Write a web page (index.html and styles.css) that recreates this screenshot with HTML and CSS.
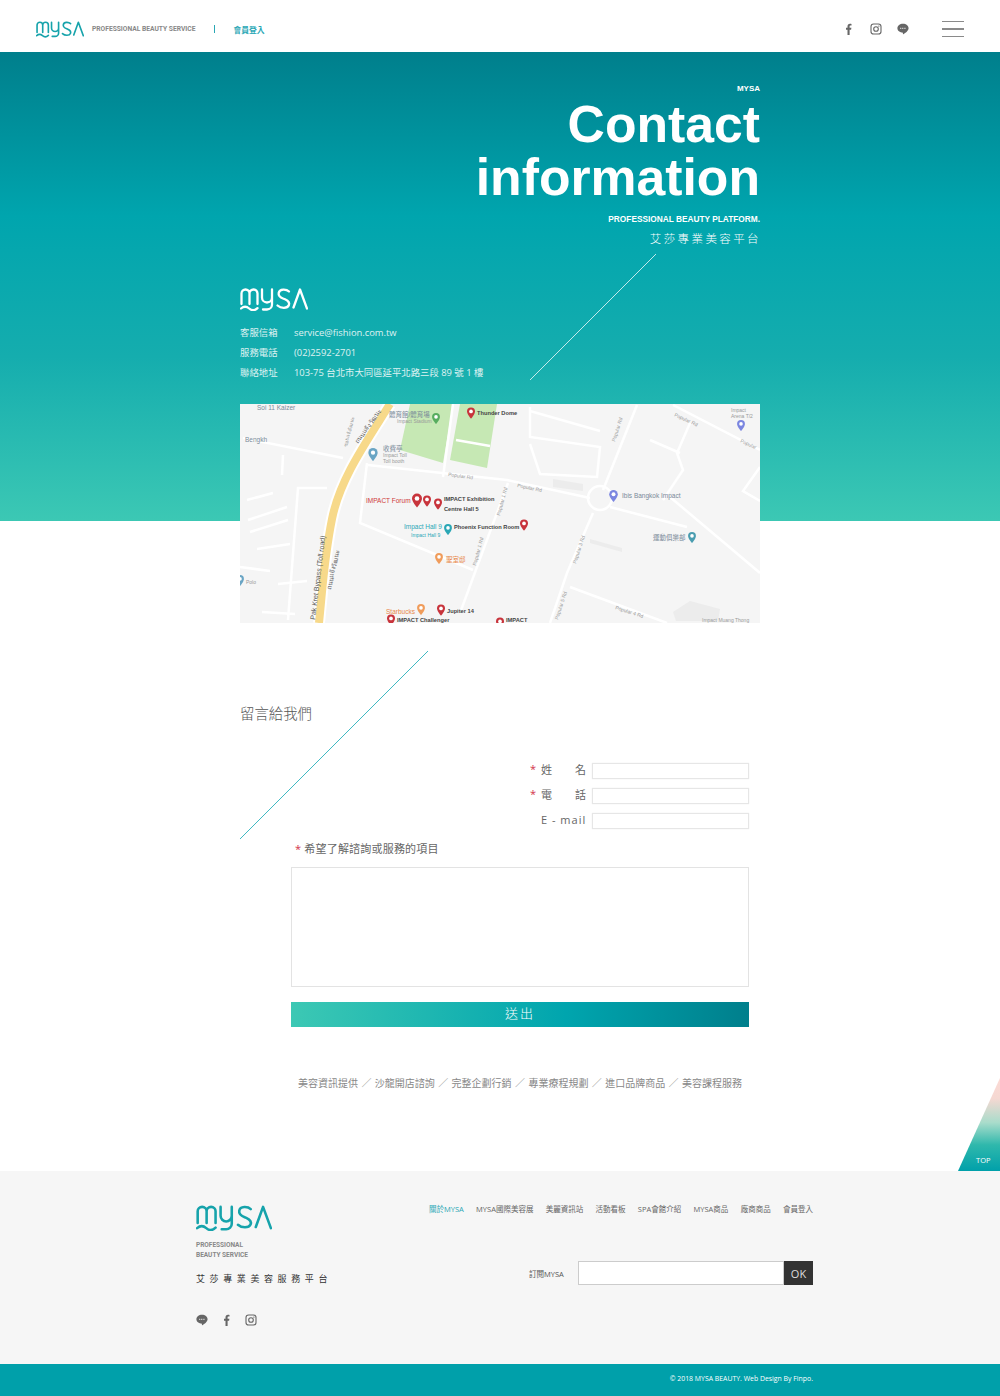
FILE: index.html
```html
<!DOCTYPE html>
<html>
<head>
    <meta charset="utf-8">
    <title>MYSA - Contact information</title>
    <link rel="stylesheet" href="styles.css">
</head>
<body>
    <svg class="sprite" width="0" height="0">
        <symbol id="logo" viewBox="0 0 68 24">
            <g fill="none" stroke="currentColor" stroke-width="2.300" stroke-linecap="round" stroke-linejoin="round">
                <path d="M1.500 17V6.500a4 4 0 0 1 8 0V17M9.500 6.500a4 4 0 0 1 8 0V17"/>
                <path d="M1 21.500c2.800-2.400 5.400-2.400 8.200 0c2.800 2.400 5.400 2.400 8.300-.4"/>
                <path d="M22 2.500v8a5 5 0 0 0 10 0v-8M32 10.500v7a5 5 0 0 1-5 5h-4"/>
                <path d="M49 4.500c-2.500-2.400-9.500-3-10.300 1.500c-.8 4.500 4 5.200 6.300 6.300c3.200 1.500 5 3.200 3.800 6c-1.500 3.400-8 3.200-11.300.2"/>
                <path d="M53.500 20.500L60 2.500l7 19"/>
            </g>
        </symbol>
        <symbol id="ico-f" viewBox="0 0 12 12">
            <path fill="currentColor" d="M4.500 12V6.700H3V4.800h1.500V3.400C4.500 1.700 5.400.8 7 .8c.7 0 1.200 0 1.500.1v1.700h-1c-.7 0-.9.300-.9 1v1.200h1.800l-.3 1.900H6.600V12z"/>
        </symbol>
        <symbol id="ico-ig" viewBox="0 0 12 12">
            <g fill="none" stroke="currentColor" stroke-width="1.100">
                <rect x="1" y="1" width="10" height="10" rx="2.600"/>
                <circle cx="6" cy="6" r="2.300"/>
            </g>
            <circle cx="8.900" cy="3.100" r=".7" fill="currentColor"/>
        </symbol>
        <symbol id="ico-line" viewBox="0 0 12 12">
            <path fill="currentColor" d="M6 .8c3.100 0 5.600 1.900 5.600 4.400c0 2.300-3.100 4.700-5.300 6c-.4.200-.5 0-.4-.4l.1-1.100C2.800 9.500.4 7.600.4 5.200C.4 2.700 2.900.8 6 .8z"/>
            <path stroke="#fff" stroke-width=".8" d="M3 5.300h6" stroke-dasharray="1.200 .6"/>
        </symbol>
        <symbol id="pin" viewBox="0 0 10 14" overflow="visible">
            <path fill="currentColor" d="M5 0a5 5 0 0 1 5 5c0 3.400-5 9-5 9S0 8.400 0 5a5 5 0 0 1 5-5z"/>
            <circle cx="5" cy="5" r="2.300" fill="#fff"/>
        </symbol>
    </svg>

    <header class="topbar">
        <div class="topbar-left">
            <svg class="topbar-logo"><use href="#logo"/></svg>
            <span class="topbar-slogan">PROFESSIONAL BEAUTY SERVICE</span>
            <span class="topbar-sep"></span>
            <a class="topbar-login">會員登入</a>
        </div>
        <div class="topbar-right">
            <svg class="ico"><use href="#ico-f"/></svg>
            <svg class="ico"><use href="#ico-ig"/></svg>
            <svg class="ico"><use href="#ico-line"/></svg>
            <div class="burger"><i></i><i></i><i></i></div>
        </div>
    </header>

    <section class="hero">
        <div class="wrap hero-inner">
            <div class="hero-title">
                <div class="hero-small">MYSA</div>
                <h1>Contact<br>information</h1>
                <div class="hero-platform">PROFESSIONAL BEAUTY PLATFORM.</div>
                <div class="hero-zh">艾莎專業美容平台</div>
            </div>
            <svg class="hero-line" width="128" height="128"><line x1="1" y1="127" x2="127" y2="1"/></svg>
            <svg class="contact-logo"><use href="#logo"/></svg>
            <ul class="contact-list">
                <li><span>客服信箱</span>service@fishion.com.tw</li>
                <li><span>服務電話</span>(02)2592-2701</li>
                <li><span>聯絡地址</span>103-75 台北市大同區延平北路三段 89 號 1 樓</li>
            </ul>
        </div>
    </section>

    <div class="wrap map">
        <svg width="520" height="219" viewBox="0 0 520 219">
            <rect width="520" height="219" fill="#f5f5f5"/>
            <!-- parks -->
            <path fill="#c6e8b4" d="M170 0H213L203 59L160 46Z"/>
            <path fill="#c6e8b4" d="M220 0H257L247 64L210 56Z"/>
            <g class="blocks">
                <path d="M313 75L343 80L343 87L313 83Z"/>
                <path d="M350 135L382 144L382 148L350 139Z"/>
                <path d="M433 208L450 197L480 205L478 217L436 217Z"/>
            </g>
            <!-- roads -->
            <g class="roads">
                <path d="M213 0L203 73"/>
                <path d="M216 36L250 42"/>
                <path d="M3 34L103 54"/>
                <path d="M43 51L42 71"/>
                <path d="M87 84L58 84L48 216"/>
                <path d="M7 96L33 89M8 116L47 103M10 128L48 116M17 145L50 140M0 163L30 167M38 180L67 177M22 208L55 210"/>
                <path d="M127 59L120 119L233 166"/>
                <path d="M128 61L267 76L350 94"/>
                <path d="M268 79L220 209"/>
                <path d="M363 86L397 1"/>
                <path d="M353 109L327 169L310 219"/>
                <path d="M433 1L520 46"/>
                <path d="M410 36L440 49M450 19L437 49L443 66L423 96"/>
                <path d="M370 103L447 123"/>
                <path d="M430 93L520 169"/>
                <path d="M330 183L427 219"/>
                <path d="M290 7L360 27"/>
                <path d="M290 3L290 33L360 43L357 73L300 70L290 40"/>
                <path d="M520 63L503 87L520 97"/>
                <circle cx="360" cy="94" r="12"/>
            </g>
            <!-- highway -->
            <path d="M150 0C125 40 100 75 92 115S83 180 79 219" fill="none" stroke="#fff" stroke-width="12"/>
            <path d="M150 0C125 40 100 75 92 115S83 180 79 219" fill="none" stroke="#f7d98a" stroke-width="8"/>
            <!-- labels -->
            <g class="mlabels">
                <text x="17" y="6" class="g">Soi 11 Kaizer</text>
                <text x="5" y="38" class="g">Bengkh</text>
                <text x="149" y="13" class="g">體育館/體育場</text>
                <text x="157" y="19" class="g6">Impact Stadium</text>
                <text x="143" y="47" class="g">收費亭</text>
                <text x="143" y="53" class="g6">Impact Toll</text>
                <text x="143" y="59" class="g6">Toll booth</text>
                <text x="237" y="11" class="k">Thunder Dome</text>
                <text x="126" y="99" class="r">IMPACT Forum</text>
                <text x="204" y="97" class="k">IMPACT Exhibition</text>
                <text x="204" y="107" class="k">Centre Hall 5</text>
                <text x="164" y="125" class="t">Impact Hall 9</text>
                <text x="171" y="133" class="t6">Impact Hall 9</text>
                <text x="214" y="125" class="k">Phoenix Function Room</text>
                <text x="206" y="158" class="o">聖室邸</text>
                <text x="146" y="210" class="o">Starbucks</text>
                <text x="207" y="209" class="k">Jupiter 14</text>
                <text x="157" y="218" class="k">IMPACT Challenger</text>
                <text x="266" y="218" class="k">IMPACT</text>
                <text x="382" y="94" class="g">Ibis Bangkok Impact</text>
                <text x="413" y="136" class="g">運動俱樂部</text>
                <text x="491" y="8" class="g6">Impact</text>
                <text x="491" y="14" class="g6">Arena T/2</text>
                <text x="6" y="180" class="g6">Polo</text>
                <text x="462" y="218" class="g6">Impact Muang Thong</text>
                <text class="g6" transform="translate(375 38) rotate(-72)">Popular Rd</text>
                <text class="g6" transform="translate(434 12) rotate(25)">Popular Rd</text>
                <text class="g6" transform="translate(500 38) rotate(25)">Popular</text>
                <text class="g6" transform="translate(277 83) rotate(12)">Popular Rd</text>
                <text class="g6" transform="translate(208 72) rotate(8)">Popular Rd</text>
                <text class="g6" transform="translate(260 112) rotate(-75)">Popular 1 Rd</text>
                <text class="g6" transform="translate(236 162) rotate(-75)">Popular 1 Rd</text>
                <text class="g6" transform="translate(336 160) rotate(-72)">Popular 3 Rd</text>
                <text class="g6" transform="translate(318 216) rotate(-72)">Popular 5 Rd</text>
                <text class="g6" transform="translate(375 205) rotate(18)">Popular 4 Rd</text>
                <text class="k6" transform="translate(75 216) rotate(-83)">Pak Kret Bypass (Toll road)</text>
                <text class="d6" transform="translate(91 186) rotate(-78)">ถนนแจ้งวัฒนะ</text>
                <text class="d6" transform="translate(118 40) rotate(-54)">ถนนแจ้งวัฒนะ</text>
                <text class="g6" transform="translate(107 43) rotate(-76)">ซอยแจ้งวัฒนะ</text>
            </g>
            <!-- pins -->
            <g class="pins">
                <use href="#pin" class="red" x="172" y="87" width="10" height="19"/>
                <use href="#pin" class="red" x="183" y="91" width="8" height="12"/>
                <use href="#pin" class="red" x="194" y="94" width="8" height="12"/>
                <use href="#pin" class="red" x="227" y="3" width="8" height="12"/>
                <use href="#pin" class="red" x="197" y="200" width="8" height="12"/>
                <use href="#pin" class="red" x="280" y="115" width="8" height="12"/>
                <use href="#pin" class="red" x="147" y="210" width="8" height="12"/>
                <use href="#pin" class="red" x="256" y="213" width="8" height="12"/>
                <use href="#pin" class="green" x="192" y="9" width="8" height="11"/>
                <use href="#pin" class="blue" x="128" y="44" width="10" height="13"/>
                <use href="#pin" class="teal" x="204" y="120" width="8" height="11"/>
                <use href="#pin" class="orange" x="195" y="149" width="8" height="11"/>
                <use href="#pin" class="orange" x="177" y="200" width="8" height="11"/>
                <use href="#pin" class="violet" x="369" y="86" width="9" height="12"/>
                <use href="#pin" class="slate" x="448" y="128" width="8" height="11"/>
                <use href="#pin" class="violet" x="497" y="16" width="8" height="11"/>
                <use href="#pin" class="blue" x="-4" y="171" width="8" height="11"/>
            </g>
        </svg>
    </div>

    <section class="wrap message">
        <svg class="message-line" width="188" height="188"><line x1="0" y1="188" x2="188" y2="0"/></svg>
        <h2>留言給我們</h2>
        <form class="form">
            <div class="row"><label><b>*</b><span class="spread"><span>姓</span><span>名</span></span></label><input type="text"></div>
            <div class="row"><label><b>*</b><span class="spread"><span>電</span><span>話</span></span></label><input type="text"></div>
            <div class="row"><label><span class="spread">E - mail</span></label><input type="text"></div>
            <p class="ask"><b>*</b> 希望了解諮詢或服務的項目</p>
            <textarea></textarea>
            <button type="button">送出</button>
            <p class="services">美容資訊提供 ／ 沙龍開店諮詢 ／ 完整企劃行銷 ／ 專業療程規劃 ／ 進口品牌商品 ／ 美容課程服務</p>
        </form>
    </section>

    <a class="totop"><span>TOP</span></a>

    <footer class="footer">
        <div class="footer-left">
            <svg class="footer-logo"><use href="#logo"/></svg>
            <p class="footer-en">PROFESSIONAL<br>BEAUTY SERVICE</p>
            <p class="footer-zh">艾莎專業美容服務平台</p>
            <div class="footer-icons">
                <svg class="ico"><use href="#ico-line"/></svg>
                <svg class="ico"><use href="#ico-f"/></svg>
                <svg class="ico"><use href="#ico-ig"/></svg>
            </div>
        </div>
        <div class="footer-right">
            <nav class="footer-nav">
                <a class="on">關於MYSA</a>
                <a>MYSA國際美容展</a>
                <a>美麗資訊站</a>
                <a>活動看板</a>
                <a>SPA會館介紹</a>
                <a>MYSA商品</a>
                <a>廠商商品</a>
                <a>會員登入</a>
            </nav>
            <div class="subscribe">
                <label>訂閱MYSA</label>
                <input type="text">
                <button type="button">OK</button>
            </div>
        </div>
    </footer>
    <div class="copyright">© 2018 MYSA BEAUTY. Web Design By Finpo.</div>
</body>
</html>
```

FILE: styles.css
```css
* { box-sizing: border-box; }
body { margin: 0; background: #fff; font-family: "Open Sans", "Noto Sans CJK TC", sans-serif; color: #666; position: relative; overflow-x: hidden; }
h1, h2, p, ul { margin: 0; padding: 0; }
ul { list-style: none; }
.sprite { position: absolute; }
.wrap { width: 520px; margin: 0 auto; }
.ico { width: 12px; height: 12px; color: #666; display: block; }

.topbar { height: 52px; padding: 6px 36px 0; display: flex; justify-content: space-between; align-items: center; }
.topbar-left { display: flex; align-items: center; }
.topbar-logo { width: 48px; height: 18px; color: #16a3ab; }
.topbar-slogan { margin-left: 8px; font: 700 6.7px "Roboto", sans-serif; color: #888; }
.topbar-sep { width: 1px; height: 8px; background: #2aa7b5; margin: 0 18px 0 19px; }
.topbar-login { font: 700 7.8px "Noto Sans CJK TC", sans-serif; color: #2aa7b5; }
.topbar-right { display: flex; align-items: center; gap: 15px; }
.burger { width: 22px; margin-left: 18px; display: flex; flex-direction: column; gap: 6px; }
.burger i { display: block; height: 1.5px; background: #8a8a8a; }

.hero { height: 469px; background: linear-gradient(#007f8c 0%, #00a5ae 35%, #15adae 65%, #3cc8b4 100%); }
.hero-inner { position: relative; height: 100%; padding-top: 32px; }
.hero-title { text-align: right; color: #fff; }
.hero-small { font: 700 8px/10px "Liberation Sans", sans-serif; }
.hero h1 { font: 700 51.700px/53px "Liberation Sans", sans-serif; margin-top: 4px; }
.hero-platform { font: 700 8.3px/12px "Liberation Sans", sans-serif; margin-top: 9px; }
.hero-zh { font: 300 11.5px/16px "Noto Sans CJK TC", sans-serif; letter-spacing: 2.4px; margin-top: 5px; margin-right: -1px; }
.hero-line { position: absolute; left: 289px; top: 201px; }
.hero-line line { stroke: rgba(255,255,255,.75); stroke-width: 1; }
.contact-logo { display: block; width: 68px; height: 24px; color: #fff; margin-top: 41px; }
.contact-list { margin-top: 12px; color: #fff; font-size: 9.4px; }
.contact-list li { height: 20px; line-height: 20px; opacity: .85; white-space: nowrap; }
.contact-list span { display: inline-block; width: 54px; }

.map { height: 219px; margin-top: -117px; position: relative; }
.map svg { display: block; }
.roads { fill: none; stroke: #fff; stroke-width: 2.5; }
.blocks { fill: #ececec; }
.mlabels text { font-family: "Liberation Sans", "Noto Sans CJK TC", sans-serif; font-size: 6.5px; }
.mlabels .g { fill: #7a8a99; }
.mlabels .g6 { fill: #9a9a9a; font-size: 5px; }
.mlabels .k { fill: #444; font-size: 5.700px; font-weight: 700; }
.mlabels .k6 { fill: #555; font-size: 7px; }
.mlabels .d6 { fill: #666; font-size: 6.5px; }
.mlabels .r { fill: #cf3b3b; }
.mlabels .t { fill: #2aa7b5; }
.mlabels .t6 { fill: #2aa7b5; font-size: 5px; }
.mlabels .o { fill: #e8884a; }
.pins .red { color: #c8343c; }
.pins .green { color: #57ad5f; }
.pins .blue { color: #6aa5c4; }
.pins .teal { color: #2aa7b5; }
.pins .orange { color: #f09c5b; }
.pins .violet { color: #7b86e0; }
.pins .slate { color: #4a9db0; }

.message { position: relative; height: 548px; padding-top: 80px; }
.message-line { position: absolute; left: 0; top: 28px; }
.message-line line { stroke: #3fb9c2; stroke-width: 1; }
.message h2 { font-size: 14.4px; line-height: 20px; font-weight: 300; color: #555; font-family: "Noto Sans CJK TC", sans-serif; }
.form { width: 458px; margin: 40px 0 0 51px; }
.row { display: flex; justify-content: flex-end; align-items: center; height: 16px; margin: 0 0 9px; }
.row label { display: flex; justify-content: flex-end; width: 56px; margin-right: 6px; font-size: 11px; line-height: 14px; color: #666; letter-spacing: 1px; position: relative; top: -1px; }
.row label b, .ask b { color: #d2324a; font-weight: 400; }
.row label b { position: absolute; left: 0; top: -1px; }
.spread { display: flex; justify-content: space-between; width: 46px; margin-right: -1px; white-space: nowrap; }
.row input { width: 157px; height: 16px; border: 1px solid #e6e6e6; background: #fff; box-shadow: 0 0 1px #e6e6e6; }
.ask { margin-top: 12px; padding-left: 4px; font-size: 11px; line-height: 16px; color: #666; letter-spacing: .2px; }
.form textarea { display: block; width: 458px; height: 120px; margin-top: 10px; border: 1px solid #e3e3e3; resize: none; }
.form > button { display: block; width: 458px; height: 25px; margin-top: 15px; padding: 0 0 4px; border: 0; background: linear-gradient(to right, #3cc8b4, #00a5ae 60%, #007f8c); color: #fff; font: 300 13px "Noto Sans CJK TC", sans-serif; letter-spacing: 2px; }
.services { margin-top: 48px; text-align: center; font-size: 10px; line-height: 16px; color: #888; white-space: nowrap; word-spacing: .8px; }

.totop { position: absolute; left: 958px; top: 1078px; width: 42px; height: 93px; clip-path: polygon(100% 0, 100% 100%, 0 100%); background: linear-gradient(#fcd9d4 0%, #f5d8d2 22%, #a9dccb 48%, #2fb8ac 72%, #00a0aa 100%); }
.totop span { position: absolute; left: 18px; bottom: 6px; font: 400 7.5px "Open Sans", sans-serif; color: #fff; }

.footer { height: 193px; background: #f6f6f6; padding: 33px 187px 0 196px; display: flex; justify-content: space-between; }
.footer-logo { display: block; width: 76px; height: 27px; color: #16a3ab; }
.footer-en { margin-top: 9px; font: 700 6.5px/10px "Roboto", sans-serif; color: #888; }
.footer-zh { margin-top: 13px; font: 400 9px/12px "Noto Sans CJK TC", sans-serif; letter-spacing: 4.6px; color: #333; white-space: nowrap; }
.footer-icons { display: flex; gap: 12.500px; margin-top: 29px; }
.footer-right { width: 384px; }
.footer-nav { display: flex; justify-content: space-between; font-size: 7.5px; line-height: 10px; color: #666; white-space: nowrap; }
.footer-nav .on { color: #2aa7b5; }
.subscribe { display: flex; align-items: center; margin-top: 47px; padding-left: 100px; }
.subscribe label { width: 49px; font-size: 7.5px; color: #555; }
.subscribe input { width: 206px; height: 24px; border: 1px solid #ccc; background: #fff; }
.subscribe button { width: 29px; height: 24px; border: 0; padding: 0; background: #333; color: #ddd; font: 400 11px "Open Sans", sans-serif; }

.copyright { height: 32px; padding-right: 187px; background: #00a0aa; color: #fff; text-align: right; font-size: 6.9px; line-height: 30px; }
```
